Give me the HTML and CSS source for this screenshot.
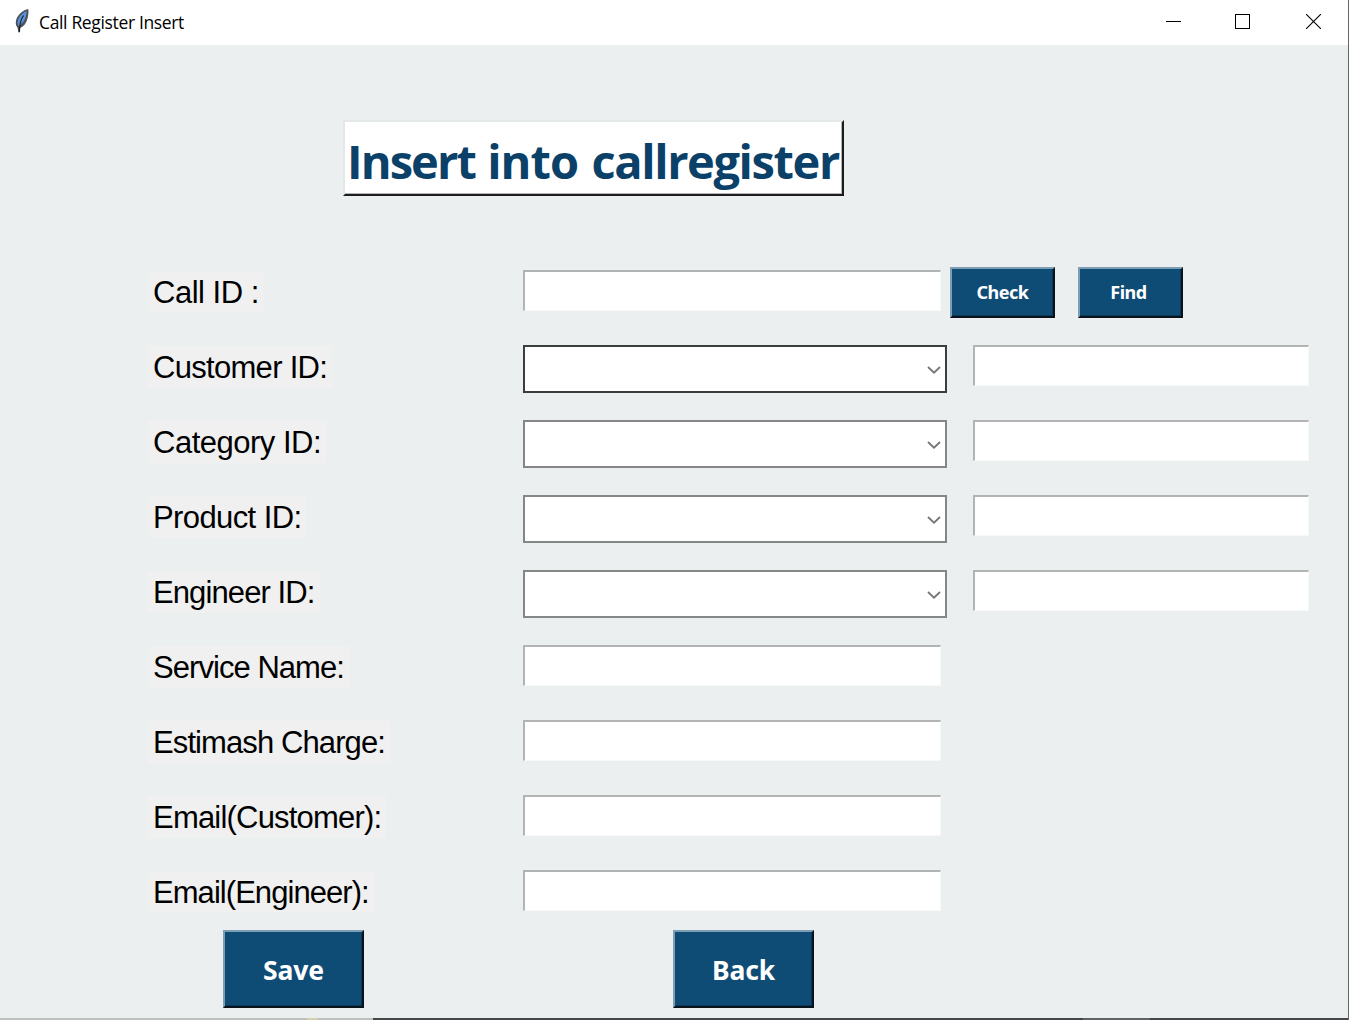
FILE: index.html
```html
<!DOCTYPE html>
<html lang="en">
<head>
<meta charset="utf-8">
<title>Call Register Insert</title>
<link rel="stylesheet" href="styles.css">
</head>
<body>
<div class="window">
  <header class="titlebar">
    <svg class="feather" width="16" height="26" viewBox="0 0 16 26">
      <path d="M14.200 1C9.500 1.800 3.500 6.500 2 12.500c-.6 3 0 5.500 1.500 7L4.500 24.500l1.500-.2.300-4.300c3.500-1.500 6-5 7.200-9.500.8-3.500 1.300-6.800.7-9.500z" fill="#4b5159"/>
      <path d="M12.500 3C8.500 5 4.700 9 3.800 13c-.300 2 0 3.800.800 5 3.500-2 5.900-5 6.900-8.500.6-2 1.100-4.500 1-6.500z" fill="#5a93dc"/>
      <path d="M9.500 7.500C7 11 5.500 15 5.200 24" fill="none" stroke="#15191f" stroke-width="1.100"/>
    </svg>
    <span class="caption">Call Register Insert</span>
    <div class="controls">
      <svg width="15" height="15" viewBox="0 0 15 15"><path d="M0 7.500h15" stroke="#000"/></svg>
      <svg width="15" height="15" viewBox="0 0 15 15"><rect x=".5" y=".5" width="14" height="14" fill="none" stroke="#000"/></svg>
      <svg width="15" height="15" viewBox="0 0 15 15"><path d="M0 0l15 15M15 0L0 15" stroke="#000" stroke-width="1.100"/></svg>
    </div>
  </header>
  <main class="content">
    <h1 class="heading"><span class="word-a">Insert</span> <span class="word-b">into</span> <span class="word-c">callregister</span></h1>
    <form class="form">
      <div class="row"><div class="cell"><label class="label t5">Call ID :</label></div><div class="entry"></div><button type="button" class="btn small check">Check</button><button type="button" class="btn small find">Find</button></div>
      <div class="row"><div class="cell"><label class="label t7">Customer ID:</label></div><div class="combo focused"><svg width="14" height="8" viewBox="0 0 14 8"><path d="M1 1l6 5.700L13 1"/></svg></div><div class="entry side"></div></div>
      <div class="row"><div class="cell"><label class="label t5">Category ID:</label></div><div class="combo"><svg width="14" height="8" viewBox="0 0 14 8"><path d="M1 1l6 5.700L13 1"/></svg></div><div class="entry side"></div></div>
      <div class="row"><div class="cell"><label class="label t6">Product ID:</label></div><div class="combo"><svg width="14" height="8" viewBox="0 0 14 8"><path d="M1 1l6 5.700L13 1"/></svg></div><div class="entry side"></div></div>
      <div class="row"><div class="cell"><label class="label t9">Engineer ID:</label></div><div class="combo"><svg width="14" height="8" viewBox="0 0 14 8"><path d="M1 1l6 5.700L13 1"/></svg></div><div class="entry side"></div></div>
      <div class="row"><div class="cell"><label class="label t10">Service Name:</label></div><div class="entry"></div></div>
      <div class="row"><div class="cell"><label class="label t9">Estimash Charge:</label></div><div class="entry"></div></div>
      <div class="row"><div class="cell"><label class="label t8">Email(Customer):</label></div><div class="entry"></div></div>
      <div class="row last"><div class="cell"><label class="label t10">Email(Engineer):</label></div><div class="entry"></div></div>
      <div class="actions"><button type="button" class="btn large">Save</button><button type="button" class="btn large">Back</button></div>
    </form>
  </main>
  <footer class="edge"></footer>
</div>
</body>
</html>
```
FILE: styles.css
```css
* { box-sizing: border-box; }
body { margin: 0; overflow: hidden; background: #ebefef; }
.window {
  width: 1349px;
  height: 1020px;
  display: flex;
  flex-direction: column;
  border-right: 1px solid #666;
  background: #ebefef;
}
.titlebar {
  flex: none;
  height: 45px;
  display: flex;
  align-items: flex-start;
  padding: 8px 27px 0 14px;
  background: #fff;
}
.caption {
  margin: 1px 0 0 9px;
  font: 17.5px/26px "Open Sans", "Noto Sans", sans-serif;
  letter-spacing: -0.35px;
  color: #000;
}
.controls { margin: 6px 0 0 auto; display: flex; gap: 54px; }
.controls svg { display: block; }
.controls svg:last-child { margin-left: 2px; }
.content { flex: 1; display: flex; flex-direction: column; align-items: flex-start; padding-top: 75px; min-height: 0; }
.heading {
  margin: 0 0 0 343px;
  width: 501px;
  height: 76px;
  background: #fff;
  border-style: solid;
  border-width: 2px;
  border-color: #e5e8e8 #1c1c1c #1c1c1c #e5e8e8;
  box-shadow: inset -1px -1px #b5b5b5;
  font: bold 47px/79px "Open Sans", "Noto Sans", sans-serif;
  color: #0b4168;
  white-space: nowrap;
  padding-left: 2px;
}
.word-a { letter-spacing: -1.9px; }
.word-b { letter-spacing: -0.9px; }
.word-c { letter-spacing: -1.4px; margin-left: 1px; }
.form { margin: 74px 0 0 148px; }
.row { display: flex; align-items: flex-start; height: 75px; }
.row.last { height: 60px; }
.cell { width: 375px; padding-top: 1px; }
.label {
  display: inline-block;
  height: 42px;
  padding: 0 5px;
  background: #f0f0f0;
  font: 31px/43px "Liberation Sans", Arial, sans-serif;
  color: #000;
  white-space: nowrap;
}
.t5 { letter-spacing: -0.5px; }
.t6 { letter-spacing: -0.6px; }
.t7 { letter-spacing: -0.7px; }
.t8 { letter-spacing: -0.8px; }
.t9 { letter-spacing: -0.9px; }
.t10 { letter-spacing: -0.95px; }
.entry {
  width: 418px;
  height: 41px;
  background: #fff;
  border-style: solid;
  border-width: 2px 1px 1px 2px;
  border-color: #b2b4b4 #f7f9f9 #f7f9f9 #b2b4b4;
}
.side { width: 336px; margin-left: 26px; }
.combo {
  width: 424px;
  height: 48px;
  display: flex;
  align-items: center;
  justify-content: flex-end;
  padding: 2px 4px 0 0;
  background: #fff;
  border: 2px solid #858686;
}
.combo.focused { border-color: #3c3d3d; }
.combo path { fill: none; stroke: #777; stroke-width: 1.8; }
.btn {
  flex: none;
  margin: 0;
  padding: 0;
  background: #0f4c75;
  color: #fff;
  border-style: solid;
  border-width: 2px;
  border-color: #7c9fb5 #08131b #08131b #7c9fb5;
  box-shadow: inset -1px -1px #0b3858;
  font-family: "Noto Sans", "Open Sans", sans-serif;
  font-weight: bold;
}
.small { width: 105px; height: 51px; margin-top: -3px; padding-bottom: 2px; font-size: 18px; letter-spacing: -0.5px; }
.check { margin-left: 9px; }
.find { margin-left: 23px; padding-right: 4px; }
.actions { display: flex; gap: 309px; margin-left: 75px; }
.large { width: 141px; height: 78px; padding-top: 2px; font-size: 26.5px; letter-spacing: -0.1px; }
.edge {
  flex: none;
  height: 2px;
  background: linear-gradient(to right, #bfbfbf 307px, #d3d0ae 307px 318px, #bfbfbf 318px 373px, #444747 373px 1083px, #606363 1083px 1150px, #444747 1150px);
}
```
